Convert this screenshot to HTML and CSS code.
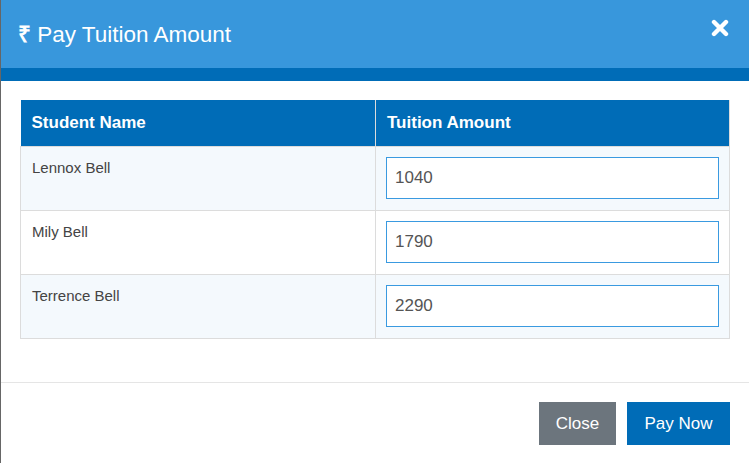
FILE: index.html
```html
<!DOCTYPE html>
<html>
<head>
<meta charset="utf-8">
<link rel="stylesheet" href="styles.css">
</head>
<body>
<div class="modal">
  <div class="modal-header">
    <h4 class="title"><span class="rupee">₹</span> Pay Tuition Amount</h4>
    <button class="close" aria-label="Close">
      <svg width="18" height="18" viewBox="0 0 18 18"><path d="M3 3 L15 15 M15 3 L3 15" stroke="#fff" stroke-width="4.4" stroke-linecap="round"/></svg>
    </button>
  </div>
  <div class="band"></div>
  <div class="modal-body">
    <table class="fees">
      <thead>
        <tr><th class="col-name">Student Name</th><th>Tuition Amount</th></tr>
      </thead>
      <tbody>
        <tr class="alt"><td>Lennox Bell</td><td><input class="amount" type="text" value="1040"></td></tr>
        <tr><td>Mily Bell</td><td><input class="amount" type="text" value="1790"></td></tr>
        <tr class="alt"><td>Terrence Bell</td><td><input class="amount" type="text" value="2290"></td></tr>
      </tbody>
    </table>
  </div>
  <div class="modal-footer">
    <button class="btn btn-gray">Close</button>
    <button class="btn btn-blue">Pay Now</button>
  </div>
</div>
</body>
</html>
```
FILE: styles.css
```css
* { box-sizing: border-box; }
html, body { margin: 0; padding: 0; background: #fff; }
body { font-family: "Liberation Sans", Arial, sans-serif; }
.modal {
  width: 749px;
  height: 463px;
  border-left: 1px solid #666;
  display: flex;
  flex-direction: column;
}
.modal-header {
  height: 68px;
  background: #3897dc;
  display: flex;
  align-items: center;
  justify-content: space-between;
  padding: 0 20px 2px 17px;
}
.title {
  margin: 0;
  color: #fff;
  font-weight: normal;
  font-size: 22.5px;
}
.rupee { font-weight: bold; }
.close {
  background: none;
  border: 0;
  padding: 0;
  width: 18px;
  height: 18px;
  margin-bottom: 10px;
  display: flex;
}
.band { height: 13px; background: #006cb7; }
.modal-body { padding: 19px 19px 0 19px; height: 301px; }
.fees {
  width: 710px;
  border-collapse: collapse;
  font-size: 15px;
}
.fees th {
  background: #006cb7;
  color: #fff;
  text-align: left;
  font-weight: bold;
  font-size: 17px;
  height: 46px;
  padding: 0 11px;
  border: 1px solid #dcdcdc;
  border-top: 0;
  border-bottom: 0;
}
.fees th.col-name { width: 355px; border-left: 0; }
.fees td {
  border: 1px solid #dcdcdc;
  height: 64px;
  padding: 0 10px;
  vertical-align: top;
  color: #444;
}
.fees td:first-child { padding: 12px 11px 0; }
.fees td:last-child { padding: 10px 10px 0; }
.fees tr.alt td { background: #f4f9fd; }
.amount {
  width: 333px;
  height: 42px;
  border: 1px solid #3a9ae0;
  padding: 0 8px;
  font-family: "Liberation Sans", Arial, sans-serif;
  font-size: 17px;
  color: #555;
  background: #fff;
  outline: none;
  display: block;
}
.modal-footer {
  border-top: 1px solid #e5e5e5;
  display: flex;
  justify-content: flex-end;
  gap: 11px;
  padding: 19px 19px 0 0;
}
.btn {
  height: 43px;
  border: 0;
  color: #fff;
  font-family: "Liberation Sans", Arial, sans-serif;
  font-size: 17px;
  padding: 0;
}
.btn-gray { background: #6c757d; width: 77px; }
.btn-blue { background: #006cb7; width: 103px; }
```
